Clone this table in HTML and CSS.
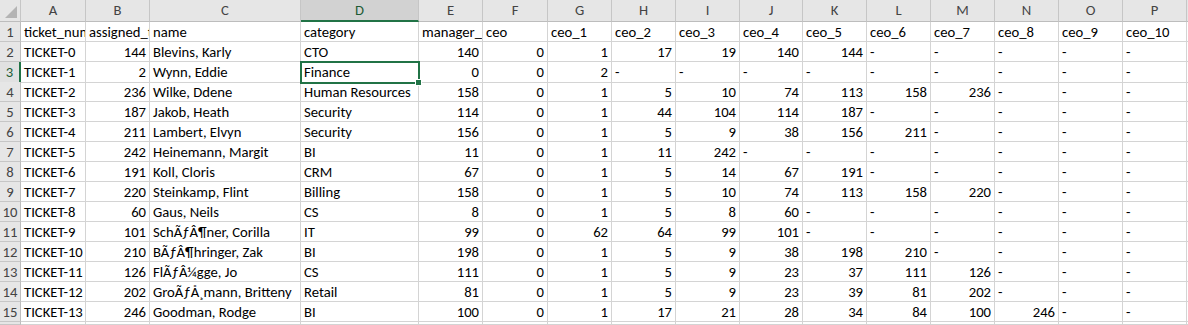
FILE: index.html
```html
<!DOCTYPE html>
<html>
<head>
<meta charset="utf-8">
<link rel="stylesheet" href="styles.css">
</head>
<body>
<div class="sheet">
  <div class="row head">
    <div class="corner"><svg width="12" height="12" viewBox="0 0 12 12"><polygon points="12,0 12,12 0,12" fill="#b4b4b4"/></svg></div>
    <div class="ch">A</div><div class="ch">B</div><div class="ch">C</div><div class="ch sel">D</div><div class="ch">E</div><div class="ch">F</div><div class="ch">G</div><div class="ch">H</div><div class="ch">I</div><div class="ch">J</div><div class="ch">K</div><div class="ch">L</div><div class="ch">M</div><div class="ch">N</div><div class="ch">O</div><div class="ch">P</div><div class="ch"></div>
  </div>
  <div class="row">
    <div class="rh">1</div><div class="c">ticket_number</div><div class="c">assigned_to</div><div class="c">name</div><div class="c">category</div><div class="c">manager_id</div><div class="c">ceo</div><div class="c">ceo_1</div><div class="c">ceo_2</div><div class="c">ceo_3</div><div class="c">ceo_4</div><div class="c">ceo_5</div><div class="c">ceo_6</div><div class="c">ceo_7</div><div class="c">ceo_8</div><div class="c">ceo_9</div><div class="c">ceo_10</div><div class="c"></div>
  </div>
  <div class="row">
    <div class="rh">2</div><div class="c">TICKET-0</div><div class="c n">144</div><div class="c">Blevins, Karly</div><div class="c">CTO</div><div class="c n">140</div><div class="c n">0</div><div class="c n">1</div><div class="c n">17</div><div class="c n">19</div><div class="c n">140</div><div class="c n">144</div><div class="c">-</div><div class="c">-</div><div class="c">-</div><div class="c">-</div><div class="c">-</div><div class="c"></div>
  </div>
  <div class="row">
    <div class="rh rsel">3</div><div class="c">TICKET-1</div><div class="c n">2</div><div class="c">Wynn, Eddie</div><div class="c active">Finance</div><div class="c n">0</div><div class="c n">0</div><div class="c n">2</div><div class="c">-</div><div class="c">-</div><div class="c">-</div><div class="c">-</div><div class="c">-</div><div class="c">-</div><div class="c">-</div><div class="c">-</div><div class="c">-</div><div class="c"></div>
  </div>
  <div class="row">
    <div class="rh">4</div><div class="c">TICKET-2</div><div class="c n">236</div><div class="c">Wilke, Ddene</div><div class="c">Human Resources</div><div class="c n">158</div><div class="c n">0</div><div class="c n">1</div><div class="c n">5</div><div class="c n">10</div><div class="c n">74</div><div class="c n">113</div><div class="c n">158</div><div class="c n">236</div><div class="c">-</div><div class="c">-</div><div class="c">-</div><div class="c"></div>
  </div>
  <div class="row">
    <div class="rh">5</div><div class="c">TICKET-3</div><div class="c n">187</div><div class="c">Jakob, Heath</div><div class="c">Security</div><div class="c n">114</div><div class="c n">0</div><div class="c n">1</div><div class="c n">44</div><div class="c n">104</div><div class="c n">114</div><div class="c n">187</div><div class="c">-</div><div class="c">-</div><div class="c">-</div><div class="c">-</div><div class="c">-</div><div class="c"></div>
  </div>
  <div class="row">
    <div class="rh">6</div><div class="c">TICKET-4</div><div class="c n">211</div><div class="c">Lambert, Elvyn</div><div class="c">Security</div><div class="c n">156</div><div class="c n">0</div><div class="c n">1</div><div class="c n">5</div><div class="c n">9</div><div class="c n">38</div><div class="c n">156</div><div class="c n">211</div><div class="c">-</div><div class="c">-</div><div class="c">-</div><div class="c">-</div><div class="c"></div>
  </div>
  <div class="row">
    <div class="rh">7</div><div class="c">TICKET-5</div><div class="c n">242</div><div class="c">Heinemann, Margit</div><div class="c">BI</div><div class="c n">11</div><div class="c n">0</div><div class="c n">1</div><div class="c n">11</div><div class="c n">242</div><div class="c">-</div><div class="c">-</div><div class="c">-</div><div class="c">-</div><div class="c">-</div><div class="c">-</div><div class="c">-</div><div class="c"></div>
  </div>
  <div class="row">
    <div class="rh">8</div><div class="c">TICKET-6</div><div class="c n">191</div><div class="c">Koll, Cloris</div><div class="c">CRM</div><div class="c n">67</div><div class="c n">0</div><div class="c n">1</div><div class="c n">5</div><div class="c n">14</div><div class="c n">67</div><div class="c n">191</div><div class="c">-</div><div class="c">-</div><div class="c">-</div><div class="c">-</div><div class="c">-</div><div class="c"></div>
  </div>
  <div class="row">
    <div class="rh">9</div><div class="c">TICKET-7</div><div class="c n">220</div><div class="c">Steinkamp, Flint</div><div class="c">Billing</div><div class="c n">158</div><div class="c n">0</div><div class="c n">1</div><div class="c n">5</div><div class="c n">10</div><div class="c n">74</div><div class="c n">113</div><div class="c n">158</div><div class="c n">220</div><div class="c">-</div><div class="c">-</div><div class="c">-</div><div class="c"></div>
  </div>
  <div class="row">
    <div class="rh">10</div><div class="c">TICKET-8</div><div class="c n">60</div><div class="c">Gaus, Neils</div><div class="c">CS</div><div class="c n">8</div><div class="c n">0</div><div class="c n">1</div><div class="c n">5</div><div class="c n">8</div><div class="c n">60</div><div class="c">-</div><div class="c">-</div><div class="c">-</div><div class="c">-</div><div class="c">-</div><div class="c">-</div><div class="c"></div>
  </div>
  <div class="row">
    <div class="rh">11</div><div class="c">TICKET-9</div><div class="c n">101</div><div class="c">SchÃƒÂ¶ner, Corilla</div><div class="c">IT</div><div class="c n">99</div><div class="c n">0</div><div class="c n">62</div><div class="c n">64</div><div class="c n">99</div><div class="c n">101</div><div class="c">-</div><div class="c">-</div><div class="c">-</div><div class="c">-</div><div class="c">-</div><div class="c">-</div><div class="c"></div>
  </div>
  <div class="row">
    <div class="rh">12</div><div class="c">TICKET-10</div><div class="c n">210</div><div class="c">BÃƒÂ¶hringer, Zak</div><div class="c">BI</div><div class="c n">198</div><div class="c n">0</div><div class="c n">1</div><div class="c n">5</div><div class="c n">9</div><div class="c n">38</div><div class="c n">198</div><div class="c n">210</div><div class="c">-</div><div class="c">-</div><div class="c">-</div><div class="c">-</div><div class="c"></div>
  </div>
  <div class="row">
    <div class="rh">13</div><div class="c">TICKET-11</div><div class="c n">126</div><div class="c">FlÃƒÂ¼gge, Jo</div><div class="c">CS</div><div class="c n">111</div><div class="c n">0</div><div class="c n">1</div><div class="c n">5</div><div class="c n">9</div><div class="c n">23</div><div class="c n">37</div><div class="c n">111</div><div class="c n">126</div><div class="c">-</div><div class="c">-</div><div class="c">-</div><div class="c"></div>
  </div>
  <div class="row">
    <div class="rh">14</div><div class="c">TICKET-12</div><div class="c n">202</div><div class="c">GroÃƒÅ¸mann, Britteny</div><div class="c">Retail</div><div class="c n">81</div><div class="c n">0</div><div class="c n">1</div><div class="c n">5</div><div class="c n">9</div><div class="c n">23</div><div class="c n">39</div><div class="c n">81</div><div class="c n">202</div><div class="c">-</div><div class="c">-</div><div class="c">-</div><div class="c"></div>
  </div>
  <div class="row">
    <div class="rh">15</div><div class="c">TICKET-13</div><div class="c n">246</div><div class="c">Goodman, Rodge</div><div class="c">BI</div><div class="c n">100</div><div class="c n">0</div><div class="c n">1</div><div class="c n">17</div><div class="c n">21</div><div class="c n">28</div><div class="c n">34</div><div class="c n">84</div><div class="c n">100</div><div class="c n">246</div><div class="c">-</div><div class="c">-</div><div class="c"></div>
  </div>
  <div class="row stub">
    <div class="rh"></div><div class="c"></div><div class="c"></div><div class="c"></div><div class="c"></div><div class="c"></div><div class="c"></div><div class="c"></div><div class="c"></div><div class="c"></div><div class="c"></div><div class="c"></div><div class="c"></div><div class="c"></div><div class="c"></div><div class="c"></div><div class="c"></div><div class="c"></div>
  </div>
</div>
</body>
</html>
```

FILE: styles.css
```css
html, body {
  margin: 0;
  padding: 0;
  background: #ffffff;
  overflow: hidden;
}
.sheet {
  width: 1188px;
  height: 325px;
  overflow: hidden;
  font-family: Carlito, Calibri, Lato, "Liberation Sans", sans-serif;
  font-size: 14.67px;
  color: #000000;
}
.row {
  display: grid;
  grid-template-columns: 21px 65px 64px 151px 118px 64px 65px 64px 64px 64px 63px 64px 64px 64px 64px 64px 64px 40px;
  height: 20px;
}
.row.head {
  height: 22px;
}
.row.stub {
  height: 3px;
}
.row > div {
  box-sizing: border-box;
  border-right: 1px solid #d4d4d4;
  border-bottom: 1px solid #d4d4d4;
  white-space: nowrap;
  overflow: hidden;
  line-height: 20px;
}
.c {
  padding: 0 3px;
  text-align: left;
}
.c.n {
  text-align: right;
  padding-right: 3px;
}
.corner, .ch, .rh {
  background: #e6e6e6;
  color: #444444;
}
.row > .corner, .row > .ch {
  border-right-color: #c6c6c6;
  border-bottom-color: #bdbdbd;
}
.corner {
  display: flex;
  align-items: flex-end;
  justify-content: flex-end;
  padding: 0 3px 3px 0;
}
.corner svg { display: block; }
.ch {
  text-align: center;
  line-height: 21px;
}
.row > .ch.sel {
  background: #d2d2d2;
  color: #1e5b34;
  border-bottom: 2px solid #217346;
}
.rh {
  text-align: center;
}
.row > .rh {
  border-right-color: #bdbdbd;
  border-bottom-color: #c6c6c6;
}
.row > .rh.rsel {
  background: #e1e1e1;
  color: #1e5b34;
  border-right: 2px solid #217346;
}
.row > .c.active {
  position: relative;
  overflow: visible;
  outline: 2px solid #217346;
  outline-offset: -1px;
  z-index: 1;
}
.c.active::after {
  content: "";
  position: absolute;
  right: -4px;
  bottom: -4px;
  width: 5px;
  height: 5px;
  background: #217346;
  border: 1px solid #ffffff;
}
```
